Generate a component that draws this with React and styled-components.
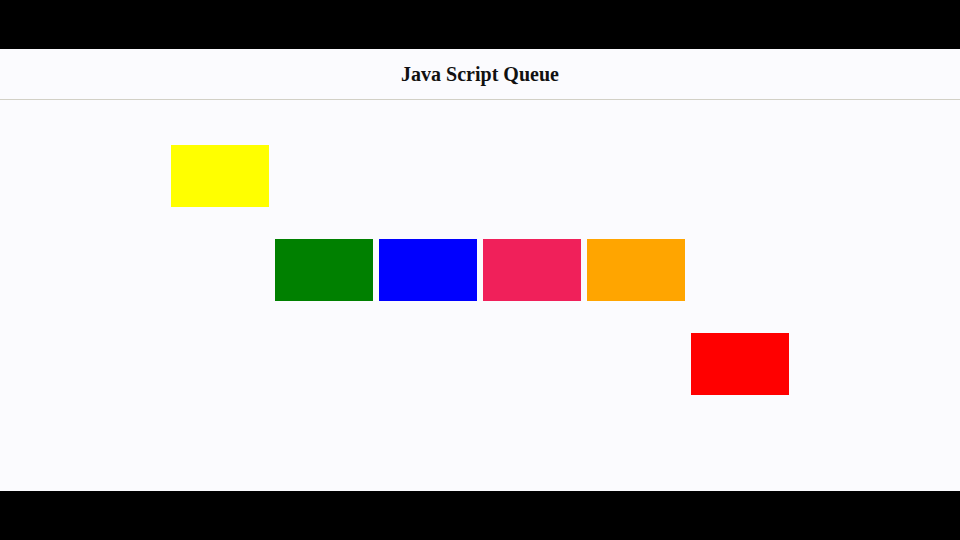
import React from 'react'
import styled, { createGlobalStyle } from 'styled-components'

const Global = createGlobalStyle`
  html, body {
    margin: 0;
    padding: 0;
    background: #000;
  }
`

const Frame = styled.div`
  width: 960px;
  height: 540px;
  display: flex;
  flex-direction: column;
  justify-content: center;
  background: #000;
`

const Page = styled.div`
  height: 442px;
  background: #fbfbfe;
  display: flex;
  flex-direction: column;
`

const Header = styled.header`
  height: 51px;
  box-sizing: border-box;
  border-bottom: 1px solid #d2d0c6;
  display: flex;
  align-items: center;
  justify-content: center;
`

const Title = styled.h1`
  margin: 0;
  font-family: "Liberation Serif", "Times New Roman", serif;
  font-size: 20px;
  font-weight: bold;
  color: #111;
`

const Queue = styled.div`
  display: grid;
  grid-template-columns: repeat(6, 98px);
  grid-auto-rows: 62px;
  column-gap: 6px;
  row-gap: 32px;
  justify-content: center;
  padding-top: 45px;
`

const Block = styled.div`
  background: ${({ colour }) => colour};
  grid-column: ${({ col }) => col};
  grid-row: ${({ row }) => row};
`

const blocks = [
  { colour: '#ffff00', col: 1, row: 1 },
  { colour: '#008000', col: 2, row: 2 },
  { colour: '#0000ff', col: 3, row: 2 },
  { colour: '#f0205a', col: 4, row: 2 },
  { colour: '#ffa500', col: 5, row: 2 },
  { colour: '#ff0000', col: 6, row: 3 },
]

const App = () =>
  <Frame>
    <Global />
    <Page>
      <Header>
        <Title>Java Script Queue</Title>
      </Header>
      <Queue>
        {blocks.map((b, i) =>
          <Block key={i} colour={b.colour} col={b.col} row={b.row} />
        )}
      </Queue>
    </Page>
  </Frame>

export default App
